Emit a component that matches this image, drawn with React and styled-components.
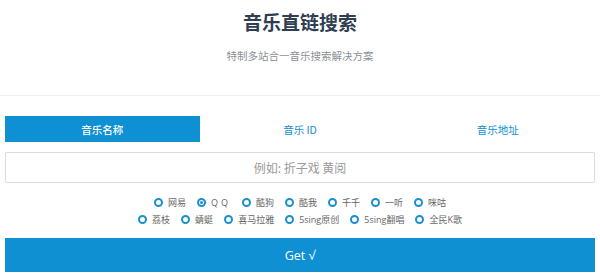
import React, { useState } from "react";
import styled, { createGlobalStyle } from "styled-components";

const GlobalStyle = createGlobalStyle`
  html, body {
    margin: 0;
    padding: 0;
    background: #fff;
    font-family: "Open Sans", "Noto Sans CJK SC", sans-serif;
  }
`;

const Header = styled.header`
  height: 96px;
  border-bottom: 1px solid #eef0f2;
  text-align: center;
  padding-top: 8px;
  box-sizing: border-box;
`;

const Title = styled.h1`
  margin: 0;
  font-size: 19px;
  line-height: 28px;
  font-weight: 700;
  color: #2f3e51;
  font-family: "Noto Sans CJK SC", sans-serif;
`;

const Subtitle = styled.p`
  margin: 13px 0 0;
  font-size: 10.5px;
  line-height: 14px;
  color: #8a8f95;
  font-family: "Noto Sans CJK SC", sans-serif;
`;

const Main = styled.main`
  padding: 20px 5px 0 5px;
`;

const Tabs = styled.div`
  display: grid;
  grid-template-columns: repeat(3, 1fr);
  column-gap: 3px;
  height: 26px;
`;

const Tab = styled.div`
  display: flex;
  align-items: center;
  justify-content: center;
  font-size: 10.5px;
  font-weight: ${(p) => (p.$active ? 500 : 400)};
  font-family: "Noto Sans CJK SC", sans-serif;
  color: ${(p) => (p.$active ? "#fff" : "#0e90d2")};
  background: ${(p) => (p.$active ? "#0e90d2" : "transparent")};
  cursor: pointer;
`;

const Input = styled.input`
  display: block;
  width: 100%;
  box-sizing: border-box;
  margin-top: 10px;
  height: 31px;
  border: 1px solid #dcdcdc;
  border-radius: 1px;
  text-align: center;
  font-size: 12px;
  font-family: "Noto Sans CJK SC", sans-serif;
  outline: none;
  &::placeholder {
    color: #9a9a9a;
  }
`;

const Sources = styled.div`
  margin-top: 11px;
  display: flex;
  flex-direction: column;
  align-items: center;
`;

const SourceRow = styled.div`
  display: flex;
  justify-content: center;
  gap: 11px;
  height: 17px;
  align-items: center;
`;

const Option = styled.label`
  display: flex;
  align-items: center;
  gap: 5px;
  font-size: 9px;
  color: #666;
  font-family: "Open Sans", "Noto Sans CJK SC", sans-serif;
  letter-spacing: ${(p) => (p.$spaced ? "3px" : "0")};
  cursor: pointer;
`;

const Dot = styled.span`
  width: 9px;
  height: 9px;
  box-sizing: border-box;
  border-radius: 50%;
  border: 2px solid #1a8fcf;
  display: flex;
  align-items: center;
  justify-content: center;
  &::after {
    content: "";
    width: 3px;
    height: 3px;
    border-radius: 50%;
    background: ${(p) => (p.$checked ? "#1a8fcf" : "transparent")};
  }
`;

const GetButton = styled.button`
  display: block;
  width: 100%;
  margin-top: 10px;
  height: 34px;
  border: none;
  background: #0e90d2;
  color: #fff;
  font-size: 12.5px;
  font-family: "Open Sans", sans-serif;
  cursor: pointer;
`;

const rowOne = [
  ["netease", "网易"],
  ["qq", "QQ"],
  ["kugou", "酷狗"],
  ["kuwo", "酷我"],
  ["baidu", "千千"],
  ["1ting", "一听"],
  ["migu", "咪咕"],
];

const rowTwo = [
  ["lizhi", "荔枝"],
  ["qingting", "蜻蜓"],
  ["ximalaya", "喜马拉雅"],
  ["5singyc", "5sing原创"],
  ["5singfc", "5sing翻唱"],
  ["kg", "全民K歌"],
];

export default function App() {
  const [tab, setTab] = useState(0);
  const [source, setSource] = useState("qq");

  const renderRow = (items) => (
    <SourceRow>
      {items.map(([key, label]) => (
        <Option key={key} $spaced={key === "qq"} onClick={() => setSource(key)}>
          <Dot $checked={source === key} />
          {label}
        </Option>
      ))}
    </SourceRow>
  );

  return (
    <>
      <GlobalStyle />
      <Header>
        <Title>音乐直链搜索</Title>
        <Subtitle>特制多站合一音乐搜索解决方案</Subtitle>
      </Header>
      <Main>
        <Tabs>
          {["音乐名称", "音乐 ID", "音乐地址"].map((t, i) => (
            <Tab key={t} $active={tab === i} onClick={() => setTab(i)}>
              {t}
            </Tab>
          ))}
        </Tabs>
        <Input placeholder="例如: 折子戏 黄阅" />
        <Sources>
          {renderRow(rowOne)}
          {renderRow(rowTwo)}
        </Sources>
        <GetButton>Get √</GetButton>
      </Main>
    </>
  );
}
